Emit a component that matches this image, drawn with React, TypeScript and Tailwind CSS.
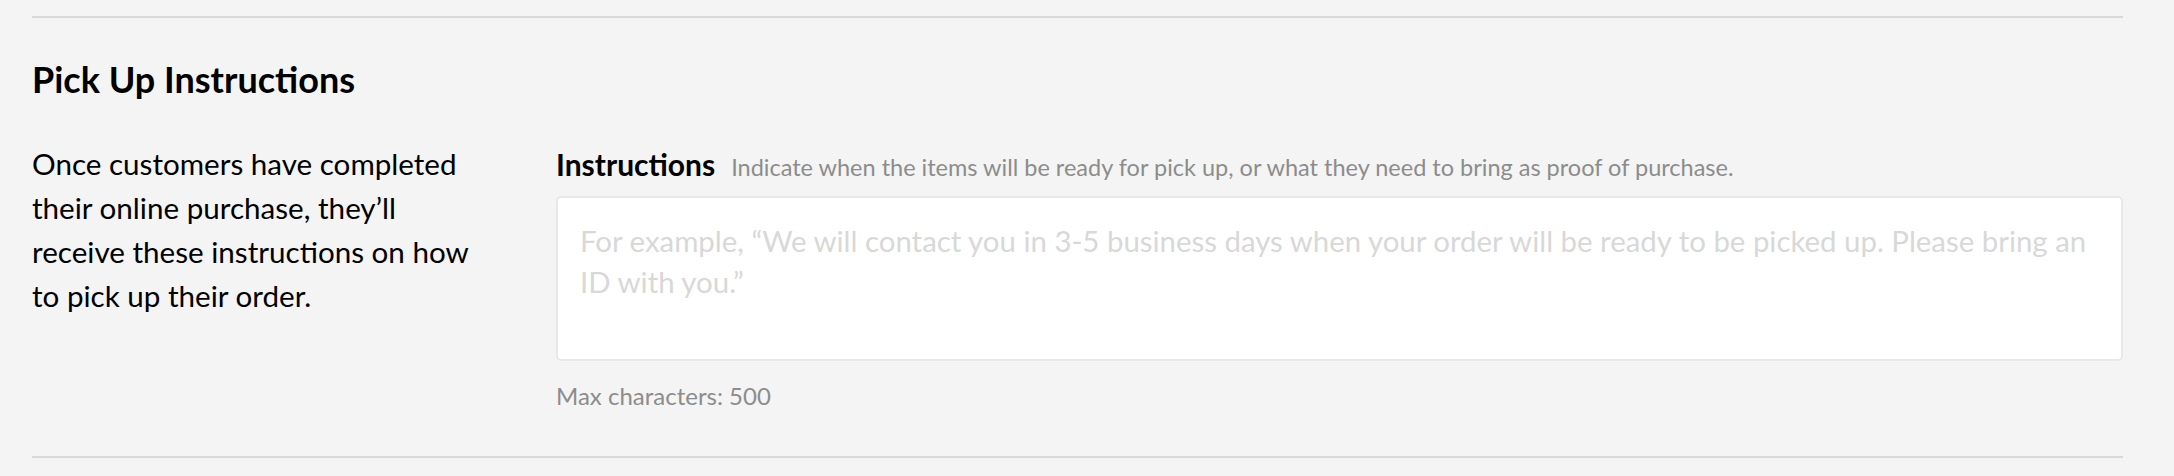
export default function App() {
  return (
    <div className="h-[476px] w-full bg-[#f4f4f4] pl-8 pr-[51px] pt-4 font-['Lato','Open_Sans',sans-serif] text-black">
      <div className="h-[2px] bg-[#d8d8d8]" />

      <h2 className="mt-10 text-[36px] font-bold leading-[1.2]">Pick Up Instructions</h2>

      <div className="mt-[41px] flex">
        <p className="w-[450px] shrink-0 text-[29.6px] leading-[44px]">
          Once customers have completed their online purchase, they’ll receive these instructions on how to pick up their order.
        </p>

        <div className="ml-[74px] flex-1">
          <div className="flex h-[44px] items-baseline gap-4 leading-[44px]">
            <label htmlFor="pickup-instructions" className="text-[30px] font-bold">
              Instructions
            </label>
            <span className="text-[23.5px] leading-[30px] text-[#8c8c8c]">
              Indicate when the items will be ready for pick up, or what they need to bring as proof of purchase.
            </span>
          </div>

          <textarea
            id="pickup-instructions"
            className="mt-[10px] block h-[165px] w-full resize-none rounded-[5px] border-2 border-[#e8e8e8] bg-white px-[22px] pt-[22px] pb-4 text-[29.4px] leading-[41px] outline-none placeholder:text-[#d8d8d8]"
            placeholder="For example, “We will contact you in 3-5 business days when your order will be ready to be picked up. Please bring an ID with you.”"
          />

          <p className="mt-[17px] text-[24px] leading-[36px] text-[#8c8c8c]">Max characters: 500</p>
        </div>
      </div>

      <div className="mt-[42px] h-[2px] bg-[#d8d8d8]" />
    </div>
  );
}
